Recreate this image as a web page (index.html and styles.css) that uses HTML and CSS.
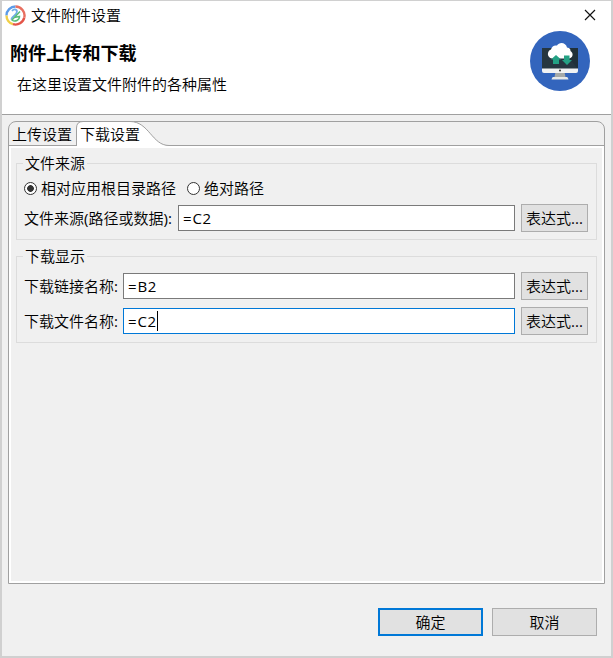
FILE: index.html
```
<!DOCTYPE html>
<html lang="zh-CN">
<head>
<meta charset="utf-8">
<title>文件附件设置</title>
<link rel="stylesheet" href="styles.css">
</head>
<body>
<div class="dialog">
  <header class="header">
    <div class="titlebar">
      <svg class="app-icon" width="21" height="21" viewBox="0 0 21 21" fill="none">
        <g stroke-width="2.4">
          <path d="M10.500 1.500A9 9 0 0 0 1.500 10.500" stroke="#5b9be8"/>
          <path d="M1.500 10.500A9 9 0 0 0 8 19.200" stroke="#f0cf48"/>
          <path d="M8 19.200A9 9 0 0 0 19.300 12.500" stroke="#e45448"/>
          <path d="M19.300 12.500A9 9 0 0 0 10.500 1.500" stroke="#e86f60"/>
        </g>
        <path d="M7 6C9.500 3 13 4.500 11.500 8C10.500 10.500 6 12 6.500 14.500" stroke="#70aee8" stroke-width="1.800"/>
        <path d="M15 6.500L7 15C10 17.500 14.500 15 14.500 11.500L9 12.500" stroke="#58bd78" stroke-width="1.500"/>
      </svg>
      <span class="title">文件附件设置</span>
      <svg class="close" width="12" height="12" viewBox="0 0 12 12"><path d="M1 1L11 11M11 1L1 11" stroke="#111" stroke-width="1.150"/></svg>
    </div>
    <div class="intro">
      <div>
        <h1>附件上传和下载</h1>
        <p>在这里设置文件附件的各种属性</p>
      </div>
      <svg class="banner" width="60" height="60" viewBox="0 0 60 60">
        <circle cx="30" cy="30" r="30" fill="#3365bd"/>
        <path d="M12 17h36v21H12z" fill="#263640"/>
        <path d="M31 17h17v21z" fill="#203039"/>
        <path d="M25.500 41h9l1 5h-11z" fill="#a5a9a8"/>
        <path d="M23 46h14q1 0 1.500 2.500h-17Q22 46 23 46z" fill="#e4e7e8"/>
        <path d="M12 37.500h36V40q0 2-2 2H14q-2 0-2-2z" fill="#f1f2f3"/>
        <circle cx="30" cy="39.500" r="1" fill="#333"/>
        <path d="M22 27.500C17 27 16.500 20 21 18.500C22 15 24 14 27 14.500C29 10.500 36 11 37 16.500C40 17 40.500 18 40.500 20C44 22 43 27.500 38.500 27.500z" fill="#fff"/>
        <path d="M26 24l5 4.500h-2v4.500h-6v-4.500H21z" fill="#24a184"/>
        <path d="M34 24.500h5.500v4.500h2.500L37 34l-5-5h2z" fill="#24a184"/>
      </svg>
    </div>
  </header>
  <main class="folder">
    <nav class="tabs">
      <span class="tab">上传设置</span>
      <span class="tab active">
        <svg class="tab-shape" width="94" height="26" viewBox="0 0 94 26"><path d="M.5 26V7Q.5.500 7 .5H54C73 .5 76 24.500 93 24.500V26z" fill="#fff"/><path d="M.5 25V7Q.5.500 7 .5H54C73 .5 76 24.500 93 24.500" fill="none" stroke="#a0a0a0"/></svg>
        <span class="tab-label">下载设置</span>
      </span>
    </nav>
    <div class="panel">
      <section class="group source">
        <h2>文件来源</h2>
        <div class="radios">
          <span class="radio checked"></span><span class="radio-text">相对应用根目录路径</span>
          <span class="radio"></span><span>绝对路径</span>
        </div>
        <div class="row"><label class="wide">文件来源<span class="mark">(</span>路径或数据<span class="mark">):</span></label><div class="field">=C2</div><button>表达式<span class="mark">...</span></button></div>
      </section>
      <section class="group display">
        <h2>下载显示</h2>
        <div class="row"><label>下载链接名称<span class="mark">:</span></label><div class="field">=B2</div><button>表达式<span class="mark">...</span></button></div>
        <div class="row"><label>下载文件名称<span class="mark">:</span></label><div class="field focus">=C2<i class="caret"></i></div><button>表达式<span class="mark">...</span></button></div>
      </section>
    </div>
  </main>
  <footer class="footer">
    <button class="primary">确定</button>
    <button>取消</button>
  </footer>
</div>
</body>
</html>
```
FILE: styles.css
```
* { box-sizing: border-box; }
body {
  margin: 0;
  height: 658px;
  padding: 1px 2px 2px;
  background: #d0d0d0;
  color: #000;
  font: 350 15px/20px "Open Sans", "Noto Sans CJK SC", sans-serif;
  overflow: hidden;
  white-space: nowrap;
}
.dialog {
  width: 609px;
  height: 655px;
  background: #f0f0f0;
  display: flex;
  flex-direction: column;
}
.header {
  height: 114px;
  background: #fff;
  border-bottom: 1px solid #a0a0a0;
}
.titlebar {
  height: 30px;
  display: flex;
  align-items: center;
  padding: 0 15px 0 3px;
}
.app-icon { margin-top: -2px; }
.title { margin: -2px 0 0 5px; }
.close { margin: -2px 0 0 auto; }
.intro {
  display: flex;
  justify-content: space-between;
  padding-right: 21px;
}
h1 {
  margin: 11px 0 0 8px;
  font-size: 18.1px;
  line-height: 22px;
  font-weight: 700;
}
p { margin: 10px 0 0 15px; }
.folder {
  width: 597px;
  height: 463px;
  margin: 6px 0 0 6px;
  border: 1px solid #a0a0a0;
  border-radius: 8px 8px 0 0;
  display: flex;
  flex-direction: column;
}
.tabs {
  height: 24px;
  flex: none;
  border-bottom: 1px solid #a0a0a0;
  display: flex;
}
.tab { width: 67px; padding: 2px 0 0 3px; }
.tab.active { position: relative; width: 94px; padding-left: 4px; }
.tab-shape { position: absolute; left: 0; top: -1px; }
.tab-label { position: relative; }
.panel {
  flex: 1;
  border: 2px solid #fff;
  padding: 15px 5px 0;
}
.group {
  width: 581px;
  border: 1px solid #dcdcdc;
  padding: 0 8px 0 7px;
}
.source { height: 77px; }
.display { height: 87px; margin-top: 16px; }
h2 {
  width: max-content;
  height: 20px;
  margin: -11px 0 0 -1px;
  padding: 0 2px;
  background: #f0f0f0;
  font-size: 15px;
  line-height: 20px;
  font-weight: inherit;
}
.radios {
  display: flex;
  align-items: center;
  height: 20px;
  margin: 5px 0 6px;
}
.radio {
  width: 13px;
  height: 13px;
  border: 1px solid #333;
  border-radius: 50%;
  background: #fff;
  margin-right: 4px;
}
.checked { background: radial-gradient(circle, #333 0 3px, #fff 3.700px); }
.radio-text { margin-right: 11px; }
.row { display: flex; align-items: center; height: 28px; }
.display .row { margin-top: 6px; }
.display .row + .row { margin-top: 7px; }
label { width: 99px; }
label.wide { width: 154px; }
.mark { font-weight: 400; }
.field {
  flex: 1;
  height: 26px;
  display: flex;
  align-items: center;
  border: 1px solid #7a7a7a;
  background: #fff;
  padding-left: 4px;
  font-size: 15px;
  font-weight: 400;
  letter-spacing: .8px;
}
.focus { border-color: #0078d7; }
.caret { width: 1px; height: 20px; background: #000; }
button {
  width: 67px;
  height: 28px;
  margin-left: 6px;
  padding: 0;
  border: 1px solid #adadad;
  background: #e1e1e1;
  color: #000;
  font: inherit;
}
.footer {
  display: flex;
  justify-content: flex-end;
  gap: 9px;
  padding: 24px 14px 0 0;
}
.footer button { width: 105px; margin: 0; }
.footer .primary { border: 2px solid #0078d7; }
```
